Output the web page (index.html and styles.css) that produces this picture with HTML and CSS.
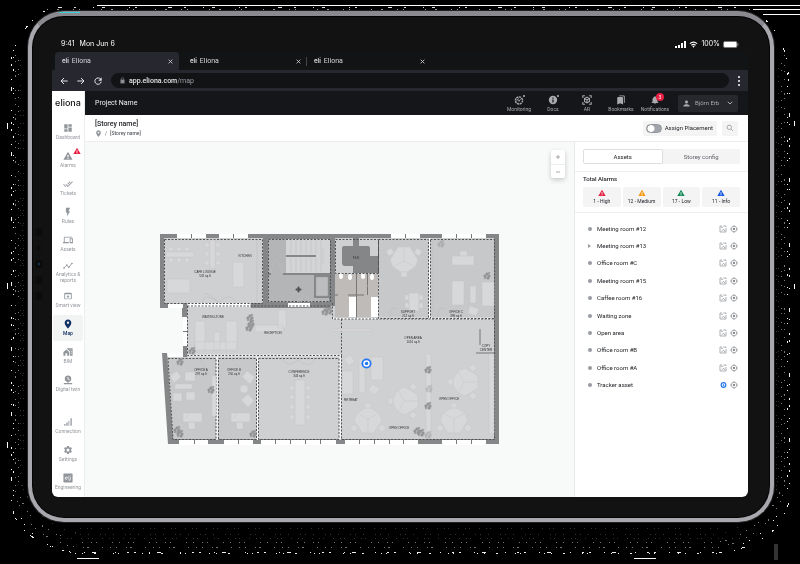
FILE: index.html
```
<!DOCTYPE html>
<html lang="en">
<head>
<meta charset="utf-8">
<meta name="viewport" content="width=device-width, initial-scale=1">
<title>Eliona</title>
<link rel="stylesheet" href="styles.css">
</head>
<body>
<svg class="sprite" aria-hidden="true">
  <symbol id="dashboard" viewBox="0 0 24 24"><path d="M3 13h8V3H3v10zm0 8h8v-6H3v6zm10 0h8V11h-8v10zm0-18v6h8V3h-8z"/></symbol>
  <symbol id="warning" viewBox="0 0 24 24"><path fill-rule="evenodd" d="M1 21h22L12 2 1 21zm12.500-2.500h-3v-2.500h3v2.500zm0-4h-3v-5h3v5z"/></symbol>
  <symbol id="tickets" viewBox="0 0 24 24"><path d="M18 7l-1.41-1.41-6.34 6.34 1.41 1.41L18 7zm4.240-1.410L11.660 16.170 7.480 12l-1.410 1.410L11.660 19l12-12-1.420-1.410zM.410 13.410L6 19l1.410-1.410L1.830 12 .410 13.410z"/></symbol>
  <symbol id="rules" viewBox="0 0 24 24"><path d="M7 2v11h3v9l7-12h-4l4-8z"/></symbol>
  <symbol id="devices" viewBox="0 0 24 24"><path d="M4 6h18V4H4c-1.100 0-2 .9-2 2v11H0v3h14v-3H4V6zm19 2h-6c-.550 0-1 .450-1 1v10c0 .550.450 1 1 1h6c.550 0 1-.450 1-1V9c0-.550-.450-1-1-1zm-1 9h-4v-7h4v7z"/></symbol>
  <symbol id="analytics" viewBox="0 0 24 24"><path d="M2 17l7-7 5 5 7-9" fill="none" stroke="currentColor" stroke-width="2"/><circle cx="2.500" cy="17" r="2"/><circle cx="9" cy="10" r="2"/><circle cx="14" cy="15" r="2"/><circle cx="21.500" cy="6" r="2"/></symbol>
  <symbol id="smart" viewBox="0 0 24 24"><path d="M19 4H5c-1.110 0-2 .9-2 2v12c0 1.100.890 2 2 2h4v-2H5V8h14v10h-4v2h4c1.100 0 2-.9 2-2V6c0-1.100-.890-2-2-2zm-7 6l-4 4h3v6h2v-6h3l-4-4z"/></symbol>
  <symbol id="place" viewBox="0 0 24 24"><path d="M12 1C7.600 1 4 4.600 4 9c0 6 8 14 8 14s8-8 8-14c0-4.400-3.600-8-8-8zm0 10.800A2.800 2.800 0 1 1 12 6.200a2.800 2.800 0 0 1 0 5.600z"/></symbol>
  <symbol id="bim" viewBox="0 0 24 24"><path d="M1 12l7-6 7 6v9h-5v-6H6v6H1z"/><path fill-rule="evenodd" d="M10 3h13v18h-6V11l-7-6zm6 3v2h2V6zm4 0v2h1V6zm-1 4v2h2v-2zm0 4v2h2v-2z"/></symbol>
  <symbol id="twin" viewBox="0 0 24 24"><path fill-rule="evenodd" d="M12 1a8 8 0 0 1 1 15.900V19h9v3H2v-3h9v-2.100A8 8 0 0 1 12 1zm-1 4v5l4 2 1-1.500-3-1.500V5z"/></symbol>
  <symbol id="signal" viewBox="0 0 24 24"><path d="M3 17h3v4H3zM8 13h3v8H8zM13 9h2v12h-2zM18 3h3v18h-3z"/></symbol>
  <symbol id="gear" viewBox="0 0 24 24"><path d="M19.140 12.940c.040-.3.060-.610.060-.940s-.020-.640-.070-.940l2.030-1.580a.490.490 0 0 0 .120-.610l-1.920-3.320a.490.490 0 0 0-.590-.220l-2.390.960a7 7 0 0 0-1.620-.940l-.360-2.540A.480.480 0 0 0 13.920 2.400h-3.840a.480.480 0 0 0-.480.410l-.360 2.540c-.590.240-1.130.570-1.620.940l-2.390-.960a.490.490 0 0 0-.590.220L2.720 8.870a.480.480 0 0 0 .120.610l2.030 1.580c-.050.3-.070.620-.070.940s.020.640.070.940l-2.030 1.580a.490.490 0 0 0-.120.610l1.920 3.320c.120.220.370.290.590.220l2.390-.960c.5.380 1.030.7 1.620.940l.360 2.540c.050.240.240.410.480.410h3.840c.240 0 .440-.170.480-.410l.360-2.540c.590-.240 1.130-.560 1.620-.940l2.390.960c.220.080.470 0 .590-.220l1.920-3.320a.480.480 0 0 0-.120-.610zM12 15.600a3.600 3.600 0 1 1 0-7.200 3.600 3.600 0 0 1 0 7.200z"/></symbol>
  <symbol id="engineering" viewBox="0 0 24 24"><path d="M3 1h18a2 2 0 0 1 2 2v18a2 2 0 0 1-2 2H3a2 2 0 0 1-2-2V3a2 2 0 0 1 2-2z"/><path d="M5 12h6a3 3 0 1 0-1 3M14 7v9h1M18 10v5q0 3-4 3M18 6v2" fill="none" stroke="#fff" stroke-width="1.500"/></symbol>
  <symbol id="monitoring" viewBox="0 0 24 24"><circle cx="12" cy="13" r="8.500" fill="none" stroke="currentColor" stroke-width="3.500" stroke-dasharray="5 1.500"/><path d="M12 14l5-5M7 14a5 5 0 0 1 5-5" stroke="currentColor" stroke-width="2" fill="none"/><circle cx="12" cy="14" r="2"/></symbol>
  <symbol id="info" viewBox="0 0 24 24"><path fill-rule="evenodd" d="M12 2a10 10 0 1 1 0 20 10 10 0 0 1 0-20zm-1.500 4v3h3V6zm0 5v7h3v-7z"/></symbol>
  <symbol id="ar" viewBox="0 0 24 24"><path d="M2 7V2h5M17 2h5v5M22 17v5h-5M7 22H2v-5M12 5l6 3.500v7L12 19l-6-3.500v-7zM6 8.500l6 3.500 6-3.500M12 12v7" fill="none" stroke="currentColor" stroke-width="2.500"/></symbol>
  <symbol id="bookmarks" viewBox="0 0 24 24"><path d="M19 18l2 1V3c0-1.100-.9-2-2-2H8.990C7.890 1 7 1.900 7 3h10c1.100 0 2 .9 2 2v13zM15 5H5c-1.100 0-2 .9-2 2v16l7-3 7 3V7c0-1.100-.9-2-2-2z"/></symbol>
  <symbol id="bell" viewBox="0 0 24 24"><path d="M12 22c1.100 0 2-.9 2-2h-4c0 1.100.890 2 2 2zm6-6v-5c0-3.070-1.640-5.640-4.500-6.320V4c0-.830-.670-1.500-1.500-1.500s-1.500.670-1.500 1.500v.680C7.630 5.360 6 7.920 6 11v5l-2 2v1h16v-1l-2-2z"/></symbol>
  <symbol id="person" viewBox="0 0 24 24"><path d="M12 12c2.210 0 4-1.790 4-4s-1.790-4-4-4-4 1.790-4 4 1.790 4 4 4zm0 2c-2.670 0-8 1.340-8 4v2h16v-2c0-2.660-5.330-4-8-4z"/></symbol>
  <symbol id="chevron" viewBox="0 0 24 24"><path d="M3 7l9 9 9-9" fill="none" stroke="currentColor" stroke-width="4"/></symbol>
  <symbol id="search" viewBox="0 0 24 24"><circle cx="10" cy="10" r="6.500" fill="none" stroke="currentColor" stroke-width="2"/><path d="M15 15l6 6" stroke="currentColor" stroke-width="2"/></symbol>
  <symbol id="close" viewBox="0 0 24 24"><path d="M3 3l18 18M21 3L3 21" stroke="currentColor" stroke-width="4"/></symbol>
  <symbol id="plus" viewBox="0 0 24 24"><path d="M12 4v16M4 12h16" stroke="currentColor" stroke-width="3"/></symbol>
  <symbol id="minus" viewBox="0 0 24 24"><path d="M4 12h16" stroke="currentColor" stroke-width="3"/></symbol>
  <symbol id="back" viewBox="0 0 24 24"><path d="M23 12H3M12 3l-9 9 9 9" fill="none" stroke="currentColor" stroke-width="3"/></symbol>
  <symbol id="forward" viewBox="0 0 24 24"><path d="M1 12h20M12 3l9 9-9 9" fill="none" stroke="currentColor" stroke-width="3"/></symbol>
  <symbol id="reload" viewBox="0 0 24 24"><path d="M20 7a9.500 9.500 0 1 0 1.500 7" fill="none" stroke="currentColor" stroke-width="3"/><path d="M23 1v10H13z"/></symbol>
  <symbol id="lock" viewBox="0 0 24 24"><path d="M5 9h14v13H5z"/><path d="M8 10V6a4 4 0 0 1 8 0v4" fill="none" stroke="currentColor" stroke-width="2"/></symbol>
  <symbol id="plan" viewBox="0 0 24 24"><path d="M9 3H3v18h18V9M13 3h8v3M8 9V7h4M8 16h3l4-4M15 17h2v-3" fill="none" stroke="currentColor" stroke-width="2"/></symbol>
  <symbol id="locate" viewBox="0 0 24 24"><circle cx="12" cy="12" r="8.500" fill="none" stroke="currentColor" stroke-width="2"/><circle cx="12" cy="12" r="3.500"/><path d="M12 0v5M12 19v5M0 12h5M19 12h5" stroke="currentColor" stroke-width="2"/></symbol>
  <symbol id="tracker" viewBox="0 0 24 24"><circle cx="12" cy="12" r="8" fill="none" stroke="currentColor" stroke-width="4"/><circle cx="12" cy="12" r="3"/></symbol>
</svg>

<svg class="grain" viewBox="0 0 800 564" preserveAspectRatio="none" aria-hidden="true" shape-rendering="crispEdges">
  <g fill="none">
    <path stroke="#fff" d="M97 5.500H800M753 9.500H800M763 14.500H800"/>
    <path stroke="#ddd" stroke-dasharray="4 12 2 17 1 8 3 24 1 5 2 31" d="M58 7.500H745"/>
    <path stroke="#999" stroke-dasharray="1 9 2 14 1 5 1 21" d="M47 9.500H755"/>
    <g stroke="#eee">
      <path stroke-dasharray="2 13 1 7 4 19 1 11 2 5" d="M45 11Q10 35 11 70V500Q14 540 70 552H728Q782 540 789 500V90Q790 40 763 18"/>
      <path stroke-dasharray="1 6 1 11 2 17 1 4 1 23" d="M13 50V490Q20 545 75 553H720Q780 535 787 490V60"/>
    </g>
    <g stroke="#777">
      <path stroke-dasharray="1 5 1 9 1 3 2 13 1 7" d="M15 55V490Q22 535 75 547H720Q772 535 784 490V55"/>
      <path stroke-dasharray="1 8 1 4 1 15 1 6" d="M18 60V490Q28 530 80 542H720Q765 530 781 490V60"/>
    </g>
    <g stroke="#333">
      <path stroke-dasharray="1 4 1 7 1 11" d="M20 60V480Q35 525 80 534H720Q758 525 778 480V60M23 110V450M22 200V400"/>
      <path stroke-dasharray="1 6 1 3 1 9" d="M80 528H720M60 538H740M776 100V490"/>
    </g>
    <path stroke="#fff" d="M77 558.500h22M634 558.500h22M7.500 283v6M7.500 442v6M7.500 123v6M794.500 121v5M794.500 284v5"/>
    <path stroke="#333" stroke-width="4" d="M776 544v16"/>
  </g>
</svg>

<div class="tablet">
  <div class="sensors" aria-hidden="true"><i></i><i class="dot"></i><i class="lens"></i><i></i><i></i></div>
  <div class="screen">
    <div class="status">
      <span>9:41</span><span>Mon Jun 6</span>
      <span class="power">
        <svg class="bars" viewBox="0 0 11 7"><path d="M0 5h2v2H0zM3 4h2v3H3zM6 2h2v5H6zM9 0h2v7H9z"/></svg>
        <svg class="wifi" viewBox="0 0 10 7"><path d="M1 2.500Q5-.8 9 2.500M2.700 4.300Q5 2.500 7.300 4.300" fill="none" stroke="#fff" stroke-width="1.300"/><path d="M3.700 5.500Q5 4.500 6.300 5.500L5 7z"/></svg>
        <span>100%</span>
        <svg class="battery" viewBox="0 0 16 7"><rect x=".5" y=".5" width="13.500" height="6" rx="1.500" fill="#fff" stroke="#777"/><path d="M15 2.500v2" stroke="#777"/></svg>
      </span>
    </div>
    <div class="tabs">
      <div class="tab active"><b>eli</b><span>Eliona</span><button aria-label="Close tab"><svg><use href="#close"/></svg></button></div>
      <div class="tab"><b>eli</b><span>Eliona</span><button aria-label="Close tab"><svg><use href="#close"/></svg></button></div>
      <div class="tab divided"><b>eli</b><span>Eliona</span><button aria-label="Close tab"><svg><use href="#close"/></svg></button></div>
    </div>
    <div class="toolbar">
      <button aria-label="Back"><svg><use href="#back"/></svg></button>
      <button aria-label="Forward"><svg><use href="#forward"/></svg></button>
      <button aria-label="Reload"><svg><use href="#reload"/></svg></button>
      <div class="address"><svg><use href="#lock"/></svg><span>app.eliona.com<i>/map</i></span></div>
      <button class="more" aria-label="Menu"><i></i><i></i><i></i></button>
    </div>

    <div class="app">
      <nav class="side">
        <a class="logo" href="#">eliona</a>
        <a href="#"><svg><use href="#dashboard"/></svg>Dashboard</a>
        <a href="#"><svg><use href="#warning"/></svg><svg class="alert"><use href="#warning"/></svg>Alarms</a>
        <a href="#"><svg><use href="#tickets"/></svg>Tickets</a>
        <a href="#"><svg><use href="#rules"/></svg>Rules</a>
        <a href="#"><svg><use href="#devices"/></svg>Assets</a>
        <a class="double" href="#"><svg><use href="#analytics"/></svg>Analytics &amp;<br>reports</a>
        <a href="#"><svg><use href="#smart"/></svg>Smart view</a>
        <a class="current" href="#"><svg><use href="#place"/></svg>Map</a>
        <a href="#"><svg><use href="#bim"/></svg>BIM</a>
        <a href="#"><svg><use href="#twin"/></svg>Digital twin</a>
        <a class="last-group" href="#"><svg><use href="#signal"/></svg>Connection</a>
        <a href="#"><svg><use href="#gear"/></svg>Settings</a>
        <a href="#"><svg><use href="#engineering"/></svg>Engineering</a>
      </nav>

      <div class="main">
        <header class="topbar">
          <span class="project">Project Name</span>
          <nav class="tools">
            <a class="has-dot" href="#"><svg><use href="#monitoring"/></svg>Monitoring</a>
            <a class="has-dot" href="#"><svg><use href="#info"/></svg>Docs</a>
            <a href="#"><svg><use href="#ar"/></svg>AR</a>
            <a href="#"><svg><use href="#bookmarks"/></svg>Bookmarks</a>
            <a href="#"><svg><use href="#bell"/></svg><em>3</em>Notifications</a>
          </nav>
          <button class="user"><svg><use href="#person"/></svg><span>Björn Erb</span><svg class="small"><use href="#chevron"/></svg></button>
        </header>
        <div class="subbar">
          <div class="heading">
            <h1>[Storey name]</h1>
            <p><svg><use href="#place"/></svg><span>/</span><a href="#">[Storey name]</a></p>
          </div>
          <label class="assign"><input type="checkbox">Assign Placement</label>
          <button class="search" aria-label="Search"><svg><use href="#search"/></svg></button>
        </div>
        <div class="content">
          <section class="map" aria-label="Floor plan">
            <div class="zoom"><button aria-label="Zoom in"><svg><use href="#plus"/></svg></button><button aria-label="Zoom out"><svg><use href="#minus"/></svg></button></div>
            <svg class="plan" viewBox="160 234 339 211">
              <defs>
                <g id="desk3"><path d="M0-2L-11-8-14-1-6 12H6L14-1 11-8 3-13H-3L-11-8M0-2V12M0-2L11-8"/><rect x="-3" y="-18" width="6" height="5"/><rect x="-17" y="4" width="6" height="6" rx="1" transform="rotate(30 -14 7)"/><rect x="11" y="4" width="6" height="6" rx="1" transform="rotate(-30 14 7)"/></g>
                <g id="desk"><path d="M0 0h19v9H0zM5 9h7v7H6zM2 5l5-4"/></g>
                <g id="plant"><circle r="1.500" cy="-2"/><circle r="1.500" cx="2"/><circle r="1.500" cx="-2"/><circle r="1.500" cx="1" cy="2"/><circle r="1" cx="-2" cy="2"/><circle r="1" cx="2" cy="-3"/></g>
              </defs>
              <path fill="#cfd0d2" d="M162 236H497V442H171L166 356H187V305H162z"/>
              <path fill="#c7c8ca" d="M167 358H257V440H171zM379 239H494V318H379z"/>
              <path fill="#b4b5b7" d="M267 238H331V303H267z"/>
              <path fill="#bebbb8" d="M335 274H378V318H335z"/>
              <g fill="#858687">
                <path d="M160 234H499V444H494V238H335V304H331V308H251V303H263V238H164V303H168V308H160z"/>
                <path d="M263 236H268V306H263zM330 236H335V306H330z"/>
                <path fill="#b4b5b7" d="M268 239H286V273H330V302H268z"/>
                <path fill="#d3d4d5" d="M286 239H330V273H286z"/>
                <path d="M182 303H187V317H182zM183 346H187V357H183zM162 353H167L173 439H499V444H168zM286 255H316V257H286zM268 273H271V275H268zM283 273H331V275H283zM314 275H331V302H329V298H314z"/>
                <path d="M353 238H359V246H368Q370 246 370 248V256H378V273H353V266H345Q342 266 342 263V248Q342 246 344 246H353z"/>
              </g>
              <path fill="#bcbdbf" stroke="#999" stroke-width=".5" d="M316 277H328V296H316z"/>
              <g fill="#fff">
                <path d="M177 234h29v4h-29zM219 234h29v4h-29zM391 234h29v4h-29zM442 234h44v4h-44zM168 304h15v4h-15zM188 303h62v4h-62zM288 303h22v4h-22zM183 317h4v29h-4zM168 353h15v4h-15z"/>
                <path d="M179 440h29v5h-29zM224 440h29v5h-29zM261 440h75v5h-75zM345 440h73v5h-73zM442 440h44v5h-44z"/>
                <path d="M349 297h7v20h-7zM371 297h7v20h-7z"/><ellipse cx="341" cy="276" rx="2" ry="3"/><ellipse cx="350" cy="277" rx="2" ry="3"/><ellipse cx="363" cy="276" rx="2" ry="3"/><ellipse cx="372" cy="277" rx="2" ry="3"/>
              </g>
              <path stroke="#777" stroke-width="1" fill="none" d="M191.500 234v4M233.500 234v4M405.500 234v4M456.500 234v4M471.500 234v4M183 331.500h4M194.500 440v4M238.500 440v4M275.500 440v4M290.500 440v4M305.500 440v4M320.500 440v4M359.500 440v4M374.500 440v4M389.500 440v4M403.500 440v4M456.500 440v4M471.500 440v4M356.500 274V318M367.500 274V295M335 295h3M348 295h16M480 329V345M476 353H494"/>
              <path stroke="#c1c2c4" stroke-width=".7" fill="none" d="M291 240v14M296 240v14M301 240v14M306 240v14M311 240v14M316 240v14M321 240v32M291 258v14M296 258v14M301 258v14M306 258v14M311 258v14M316 258v14M323 247v18M257 240v62M433 240v78"/>
              <g fill="none" stroke="#fff" stroke-width="1.500"><path d="M217 357V440M257.500 357V440M340 357V440M187 355.500H341M333 318.500H494M429.500 238V318"/></g>
              <g fill="none" stroke="#505254" stroke-width="1" stroke-dasharray="2 1.500">
                <path d="M164.500 239.500H262.500V303.500H164.500zM268.500 239.500H330.500V301.500H268.500zM335.500 239.500H378.500V273.500H335.500zM378.500 239.500H428.500V318.500H378.500zM430.500 239.500H494.500V318.500H430.500zM332.500 303V319H494M187.500 306H331M187.500 306V355.500H341.500V319M168 358.500H216V439.500H173zM218.500 358.500H256.500V439.500H218.500zM258.500 358.500H339V439.500H258.500zM341.500 356V439.500H494.500V319"/>
              </g>
              <g fill="#d7d8da" stroke="#c6c7c9" stroke-width=".5">
                <path d="M166 252h28v5h-28zM210 240h5v28h-5zM233 262h11v25h-11zM167 279h23v14h-23zM195 321h10v30h-10zM195 342h42v8h-42zM214 332h6v18h-6zM226 321h11v30h-11zM255 325h28v7h-28zM278 310h8v18h-8z"/>
                <circle cx="171" cy="249" r="2.500"/><circle cx="179" cy="249" r="2.500"/><circle cx="187" cy="249" r="2.500"/><circle cx="171" cy="260" r="2.500"/><circle cx="179" cy="260" r="2.500"/><circle cx="187" cy="260" r="2.500"/>
                <circle cx="207" cy="245" r="2.500"/><circle cx="218" cy="245" r="2.500"/><circle cx="207" cy="254" r="2.500"/><circle cx="218" cy="254" r="2.500"/><circle cx="207" cy="263" r="2.500"/><circle cx="218" cy="263" r="2.500"/>
                <path d="M295 380h10v45h-10z"/><circle cx="292" cy="388" r="2.500"/><circle cx="292" cy="397" r="2.500"/><circle cx="292" cy="407" r="2.500"/><circle cx="292" cy="417" r="2.500"/><circle cx="308" cy="388" r="2.500"/><circle cx="308" cy="397" r="2.500"/><circle cx="308" cy="407" r="2.500"/><circle cx="308" cy="417" r="2.500"/>
                <path d="M170 376l7-5 4 6-7 6zM185 372h10v9h-10zM175 384h17v5h-17zM173 393h9v8h-9zM186 392h9v8h-9zM242 377l5-6 8 6-5 7zM241 400l7-6 6 7-6 6z"/><circle cx="244" cy="389" r="4"/>
                <use href="#desk" x="183" y="413"/><use href="#desk" x="231" y="413"/><path d="M212 376h4v40h-4z"/>
                <use href="#desk3" transform="translate(404 259) rotate(180)"/><path d="M409 293h10v18h-10zM405 295h4v5h-4zM405 303h4v5h-4zM419 295h4v5h-4zM419 303h4v5h-4z"/>
                <path d="M452 256h22v9h-22zM460 251h7v5h-7zM452 281h12v24h-12zM470 286h6v17h-6zM482 282h12v24h-12zM470 306l9 3-3 7-8-3z"/>
                <path d="M342 371h11v23h-11zM359 358h6v35h-6zM371 357h12v23h-12zM344 359l6-4 5 6-6 5zM368 389l5-5 7 5-6 6zM426 354h5v83h-5zM489 354h5v80h-5zM331 329h41v2h-41z"/>
                <use href="#desk3" transform="translate(368 421)"/><use href="#desk3" transform="translate(406 401) rotate(-90)"/><use href="#desk3" transform="translate(466 382) rotate(-90)"/><use href="#desk3" transform="translate(454 421)"/>
              </g>
              <path fill="none" stroke="#bdbec0" stroke-width=".6" d="M202 302q2-10 16 0q12-10 18 0M218 302q-8-9-13-8M271 273q4-20 8-9l4 9M290 302q3-14 9-8v8q5-14 11 0M283 359q4 10 15 1q12 10 17-1M338 292q1-7 8-6M360 292q1-7 8-6M390 317q0-12 8-8M438 317q0-12 8-8M201 359q2 10 6 7M232 359q4 8 8 7"/>
              <g fill="#909193" stroke="#a5a6a8" stroke-width=".3">
                <use href="#plant" x="250" y="318"/><use href="#plant" x="251" y="324"/><use href="#plant" x="249" y="328"/><use href="#plant" x="325" y="312"/><use href="#plant" x="329" y="311"/><use href="#plant" x="487" y="276"/><use href="#plant" x="180" y="362"/><use href="#plant" x="192" y="351"/><use href="#plant" x="211" y="390"/><use href="#plant" x="177" y="430"/><use href="#plant" x="180" y="434"/><use href="#plant" x="253" y="434"/><use href="#plant" x="428" y="370"/><use href="#plant" x="428" y="406"/><use href="#plant" x="417" y="431"/><use href="#plant" x="421" y="433"/><use href="#plant" x="441" y="244" opacity=".5"/><use href="#plant" x="428" y="435" opacity=".5"/><use href="#plant" x="429" y="389" opacity=".4"/>
              </g>
              <path d="M298.500 287.500v4M296.500 289.500h4" stroke="#505152" stroke-width="2" stroke-linecap="round"/>
              <g class="room">
                <text x="205" y="273">CAFE LOUNGE</text><text x="205" y="277">532 sq.ft</text><text x="245" y="257">KITCHEN</text><text x="213" y="318">WAITING ZONE</text><text x="273" y="334">RECEPTION</text><text x="356" y="259">FILE</text>
                <text x="408" y="313">SUPPORT</text><text x="408" y="317">212 sq.ft</text><text x="456" y="313">OFFICE C</text><text x="456" y="317">399 sq.ft</text>
                <text x="413" y="339">OPEN AREA</text><text x="413" y="343">1016 sq.ft</text><text x="486" y="347">COPY</text><text x="486" y="351">CENTER</text>
                <text x="201" y="371">OFFICE A</text><text x="201" y="375">297 sq.ft</text><text x="234" y="371">OFFICE B</text><text x="234" y="375">250 sq.ft</text><text x="299" y="373">CONFERENCE</text><text x="299" y="377">343 sq.ft</text>
                <text x="351" y="401">RETREAT</text><text x="449" y="400">OPEN OFFICE</text><text x="399" y="429">OPEN OFFICE</text>
              </g>
              <circle cx="366.500" cy="363.500" r="5" fill="#2477f2"/><circle cx="366.500" cy="363.500" r="2.500" fill="none" stroke="#fff" stroke-width="1.500"/>
            </svg>
          </section>
          <aside class="panel">
            <div class="switch"><button class="on">Assets</button><button>Storey config</button></div>
            <section class="alarms">
              <h2>Total Alarms</h2>
              <div class="cards">
                <div class="high"><svg><use href="#warning"/></svg>1 - High</div>
                <div class="medium"><svg><use href="#warning"/></svg>12 - Medium</div>
                <div class="low"><svg><use href="#warning"/></svg>17 - Low</div>
                <div class="info"><svg><use href="#warning"/></svg>11 - Info</div>
              </div>
            </section>
            <ul>
              <li>Meeting room #12<svg><use href="#plan"/></svg><svg><use href="#locate"/></svg></li>
              <li class="nested">Meeting room #13<svg><use href="#plan"/></svg><svg><use href="#locate"/></svg></li>
              <li>Office room #C<svg><use href="#plan"/></svg><svg><use href="#locate"/></svg></li>
              <li>Meeting room #15<svg><use href="#plan"/></svg><svg><use href="#locate"/></svg></li>
              <li>Caffee room #16<svg><use href="#plan"/></svg><svg><use href="#locate"/></svg></li>
              <li>Waiting zone<svg><use href="#plan"/></svg><svg><use href="#locate"/></svg></li>
              <li>Open area<svg><use href="#plan"/></svg><svg><use href="#locate"/></svg></li>
              <li>Office room #B<svg><use href="#plan"/></svg><svg><use href="#locate"/></svg></li>
              <li>Office room #A<svg><use href="#plan"/></svg><svg><use href="#locate"/></svg></li>
              <li>Tracker asset<svg class="blue"><use href="#tracker"/></svg><svg><use href="#locate"/></svg></li>
            </ul>
          </aside>
        </div>
      </div>
    </div>
  </div>
</div>
</body>
</html>
```
FILE: styles.css
```
* { box-sizing: border-box; }
body {
  margin: 0;
  min-height: 100vh;
  padding: 11px 26px 42px 28px;
  display: flex;
  position: relative;
  background: #000;
  font: 6px/8px Roboto, "Liberation Sans", sans-serif;
  color: #222428;
}
a { color: inherit; text-decoration: none; }
button { font: inherit; color: inherit; background: none; border: 0; padding: 0; margin: 0; }
h1, h2, p, ul { margin: 0; padding: 0; }
i { font-style: normal; }
svg { display: block; fill: currentColor; flex: none; }
.sprite { position: absolute; width: 0; height: 0; }
.grain { position: absolute; inset: 0; width: 100%; height: 100%; }

.tablet {
  position: relative;
  flex: 1;
  display: flex;
  min-width: 0;
  padding: 20px 22px 21px 20px;
  border: 4px solid #a9a8ae;
  border-top: 5px solid #8b8a90;
  border-radius: 36px;
  background: #121212;
  box-shadow: inset 0 0 0 1px #050505, 0 0 0 1px #222;
  will-change: transform;
}
.tablet::before {
  content: "";
  position: absolute;
  top: -4px;
  left: 27px;
  width: 21px;
  height: 1px;
  background: #36d5d5;
}
.sensors {
  position: absolute;
  left: 3px;
  top: 212px;
  display: grid;
  gap: 8px;
}
.sensors i { width: 8px; height: 8px; border-radius: 50%; background: #0c0c0c; }
.sensors .dot { border: 2px solid #121212; }
.sensors .lens { background: radial-gradient(#17304f 20%, #0a0a0a 30%); }

.screen { flex: 1; min-width: 0; display: flex; flex-direction: column; }
.status {
  display: flex;
  align-items: center;
  gap: 5px;
  height: 16px;
  padding: 0 9px;
  font-family: Inter, sans-serif;
  font-size: 7px;
  color: #fff;
}
.power { display: flex; align-items: center; gap: 3px; margin-left: auto; }
.bars { width: 11px; height: 7px; }
.wifi { width: 9px; height: 7px; }
.battery { width: 16px; height: 7px; }

.tabs { display: flex; height: 18px; padding-left: 3px; color: #d2d3d6; background: #121315; }
.tab {
  display: flex;
  align-items: center;
  width: 124px;
  padding: 0 6px 0 7px;
  gap: 3px;
  font-size: 7px;
  border-radius: 4px 4px 0 0;
}
.tab b { font-family: Inter, sans-serif; font-size: 6px; }
.tab button { margin-left: auto; }
.tab svg { width: 5px; height: 5px; }
.tab.active { background: #26272f; }
.tab + .tab { padding-left: 11px; padding-right: 2px; }
.tab.divided { background: linear-gradient(#44464b, #44464b) 3px 50% / 1px 9px no-repeat; }

.toolbar {
  display: flex;
  align-items: center;
  height: 21px;
  padding: 0 8px;
  gap: 9px;
  background: #26272f;
  color: #e4e5e8;
}
.toolbar button svg { width: 8px; height: 8px; }
.address {
  flex: 1;
  display: flex;
  align-items: center;
  gap: 3px;
  height: 15px;
  padding: 0 8px;
  border-radius: 8px;
  background: #121315;
}
.address svg { width: 7px; height: 7px; color: #8b8d92; }
.address span { font-size: 7px; font-weight: 500; }
.address i { color: #9a9ca1; font-weight: 400; }
.toolbar .more { display: grid; gap: 2px; }
.more i { width: 2px; height: 2px; background: #fff; border-radius: 1px; }

.app {
  flex: 1;
  display: flex;
  overflow: hidden;
  background: #fff;
  border-radius: 0 0 6px 6px;
}
.side {
  width: 33px;
  display: flex;
  flex-direction: column;
  gap: 2px;
  padding-bottom: 2px;
  border-right: 1px solid #eceeee;
  color: #92969b;
  font-size: 5px;
  line-height: 6px;
  text-align: center;
}
.side a {
  position: relative;
  height: 26px;
  margin: 0 1px;
  padding-top: 4px;
  display: flex;
  flex-direction: column;
  align-items: center;
  gap: 1px;
  border-radius: 2px;
  white-space: nowrap;
}
.side svg { width: 10px; height: 10px; }
.side .logo {
  height: 24px;
  margin: 0 0 2px;
  justify-content: center;
  padding: 0;
  font: 500 9px/12px Inter, sans-serif;
  color: #111;
}
.side .double { padding-top: 2px; gap: 0; }
.side .current { background: #f2f3f3; color: #123063; font-weight: 500; }
.side .last-group { margin-top: auto; }
.side .alert { position: absolute; left: 20px; top: 0; width: 8px; height: 8px; color: #e61e42; }

.main { flex: 1; min-width: 0; display: flex; flex-direction: column; }
.topbar {
  display: flex;
  align-items: center;
  height: 24px;
  padding: 0 10px;
  background: #151619;
  color: #a9abaf;
}
.project { font-size: 7px; color: #eeeff0; }
.tools { display: flex; margin-left: auto; margin-right: 6px; font-size: 5px; line-height: 6px; }
.tools a {
  position: relative;
  width: 34px;
  display: flex;
  flex-direction: column;
  align-items: center;
  gap: 1px;
}
.tools svg { width: 10px; height: 10px; }
.tools .has-dot::after {
  content: "";
  position: absolute;
  top: 0;
  right: 11px;
  width: 2px;
  height: 2px;
  background: #8b8d92;
}
.tools em {
  position: absolute;
  left: 18px;
  top: -2px;
  width: 8px;
  height: 8px;
  border-radius: 50%;
  background: #e61e42;
  color: #fff;
  font-style: normal;
  line-height: 8px;
  text-align: center;
}
.user {
  display: flex;
  align-items: center;
  gap: 4px;
  height: 17px;
  width: 60px;
  padding: 0 5px 0 4px;
  border-radius: 2px;
  background: #26282d;
}
.user svg { width: 9px; height: 9px; }
.user .small { width: 6px; height: 6px; margin-left: auto; }

.subbar {
  display: flex;
  align-items: center;
  gap: 5px;
  height: 27px;
  padding: 0 10px;
  border-bottom: 1px solid #eceeee;
}
.heading { margin-right: auto; }
.heading h1 { font-size: 7px; line-height: 10px; font-weight: 500; }
.heading p { display: flex; align-items: center; gap: 3px; font-size: 5px; color: #5c6066; }
.heading svg { width: 7px; height: 7px; color: #92969b; }
.heading a { font-weight: 500; }
.assign, .search { height: 15px; border-radius: 2px; background: #f4f4f5; }
.assign { display: flex; align-items: center; gap: 3px; padding: 0 4px 0 3px; }
.assign input {
  appearance: none;
  margin: 0;
  width: 16px;
  height: 9px;
  border: 1px solid #92949b;
  border-radius: 5px;
  background: radial-gradient(circle at 4px 50%, #fff 3px, #a2a4ab 4px);
}
.search { width: 16px; display: grid; place-items: center; color: #81858a; }
.search svg { width: 8px; height: 8px; }

.content { flex: 1; display: flex; }
.map {
  flex: 1;
  min-width: 0;
  position: relative;
  padding-top: 92px;
  background: #f8faf9;
}
.plan { width: 100%; max-width: 339px; margin: 0 auto; }
.room { font: 3px "Liberation Sans", sans-serif; text-anchor: middle; fill: #303133; }
.zoom {
  position: absolute;
  top: 8px;
  right: 9px;
  display: grid;
  width: 14px;
  border-radius: 2px;
  background: #fff;
  box-shadow: 0 2px 5px #0003;
  color: #8b8f93;
}
.zoom button { display: grid; place-items: center; height: 14px; }
.zoom svg { width: 6px; height: 6px; }
.zoom button + button { border-top: 1px solid #eceeee; }

.panel { width: 174px; border-left: 1px solid #e8eaea; }
.switch {
  display: flex;
  margin: 7px 8px;
  background: #f4f4f5;
  border-radius: 2px;
  color: #5c6066;
}
.switch button { flex: 1; height: 15px; border-radius: 2px; }
.switch .on { background: #fff; border: 1px solid #dddee0; color: #222428; }
.alarms { padding: 3px 8px 5px; border: 1px solid #eceeee; border-width: 1px 0; }
.alarms h2 { font-size: 6px; line-height: 8px; font-weight: 500; margin-bottom: 4px; }
.cards { display: grid; grid-template-columns: repeat(4, 1fr); gap: 2px; }
.cards div {
  height: 20px;
  display: flex;
  flex-direction: column;
  align-items: center;
  padding-top: 2px;
  border-radius: 2px;
  background: #f4f4f5;
  font-size: 5px;
  white-space: nowrap;
}
.cards svg { width: 8px; height: 8px; }
.high svg { color: #e61e42; }
.medium svg { color: #f59b14; }
.low svg { color: #118a54; }
.info svg { color: #1757e8; }
.panel ul {
  display: grid;
  grid-auto-rows: 1fr;
  height: 174px;
  margin: 7px 10px 0 13px;
  list-style: none;
}
.panel li { display: flex; align-items: center; gap: 3px; }
.panel li::before { content: ""; width: 4px; height: 4px; margin-right: 2px; border-radius: 50%; background: #979ba0; }
.panel li.nested::before {
  width: 3px;
  margin-right: 3px;
  border-radius: 0;
  clip-path: polygon(0 0, 100% 50%, 0 100%);
}
.panel li svg { width: 8px; height: 8px; color: #85898e; }
.panel li svg:first-of-type { margin-left: auto; }
.panel li .blue { width: 7px; color: #2477f2; }
```
